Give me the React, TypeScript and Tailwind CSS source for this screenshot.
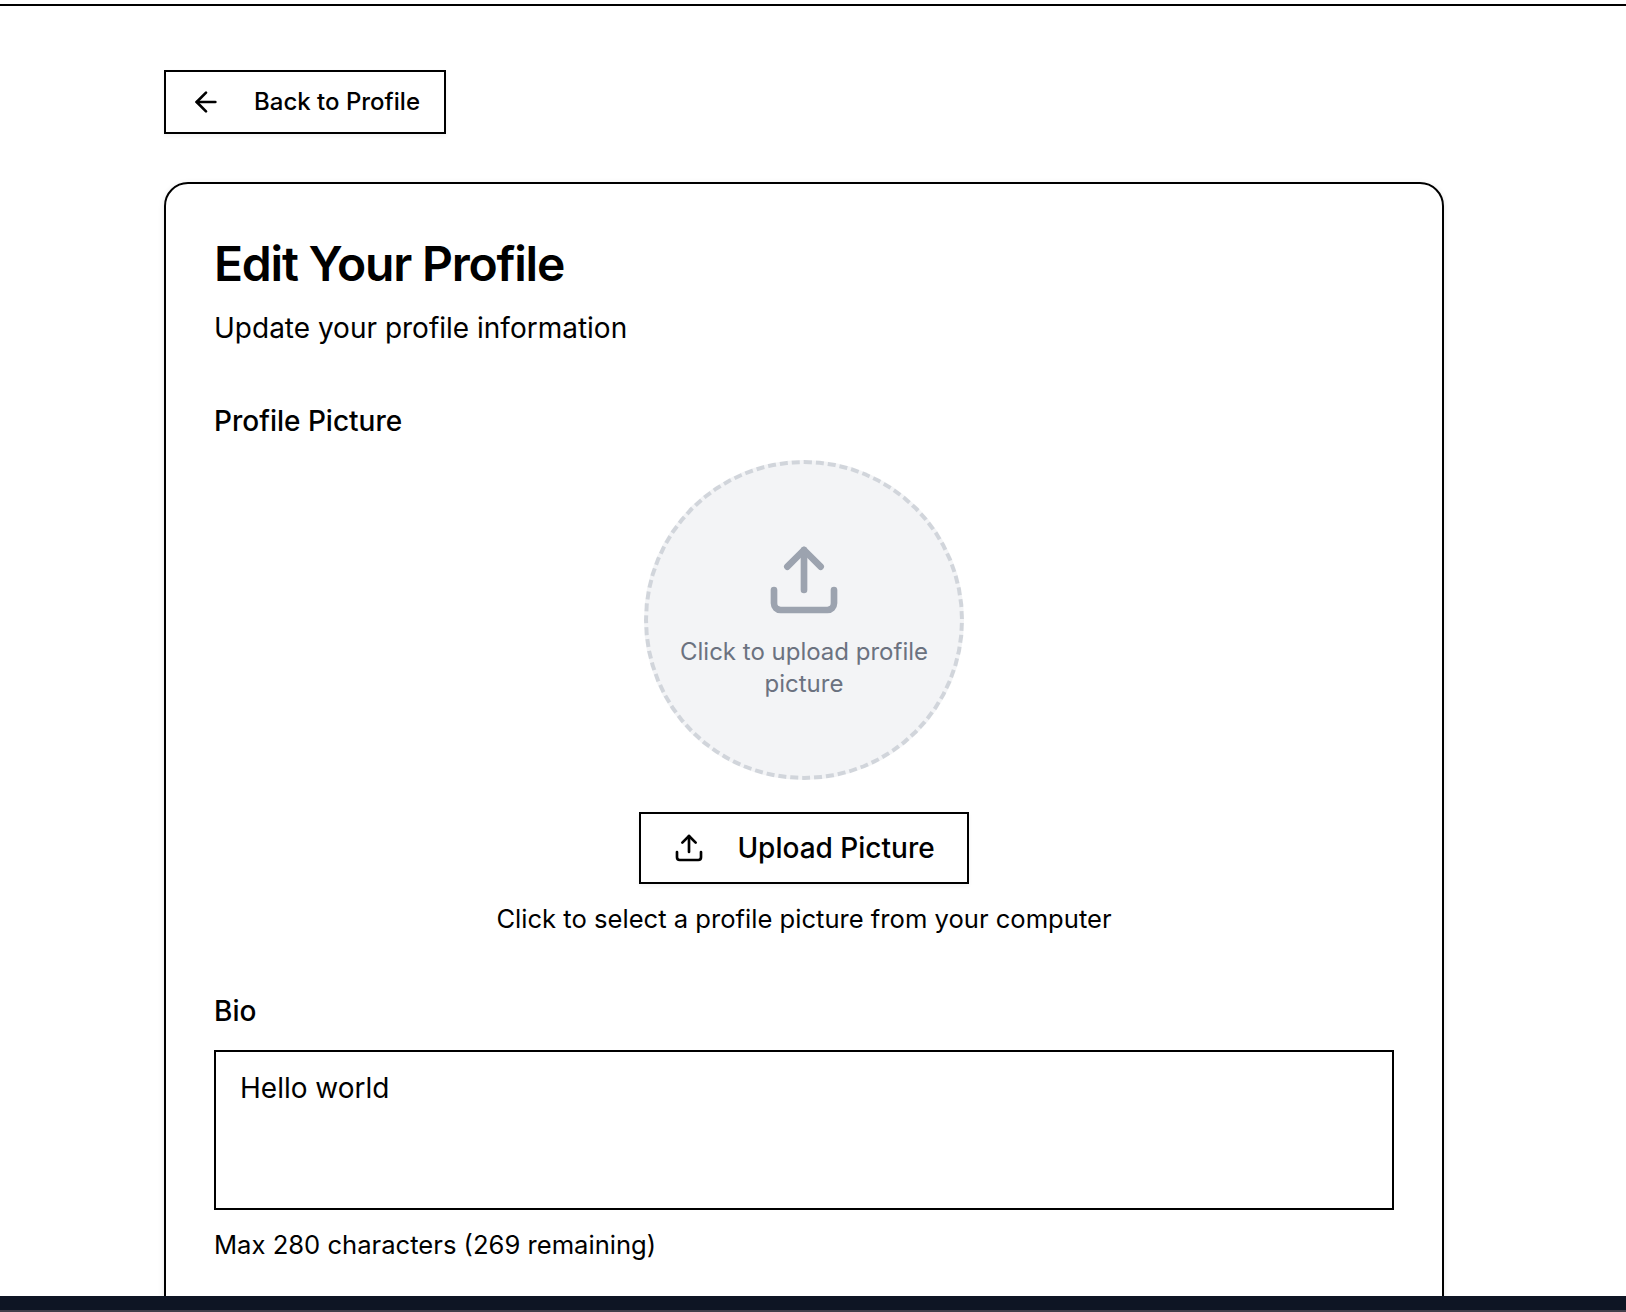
import { ArrowLeft, Upload } from "lucide-react";
import { useState } from "react";

const MAX_BIO = 280;

function Label({ children, htmlFor }: { children: string; htmlFor?: string }) {
  return (
    <label htmlFor={htmlFor} className="block text-[28px] leading-7 font-medium">
      {children}
    </label>
  );
}

export default function App() {
  const [bio, setBio] = useState("Hello world");

  return (
    <div className="flex h-[1312px] w-full flex-col overflow-hidden bg-white font-['Inter',sans-serif] text-black antialiased">
      <header className="h-1.5 shrink-0 border-b-2 border-black bg-white" />

      <main className="min-h-0 flex-1 overflow-hidden pt-16 pl-[164px]">
        <button className="flex h-16 items-center gap-8 border-2 border-black bg-white px-6 text-2xl font-medium shadow-[0_2px_4px_rgba(0,0,0,0.05)]">
          <ArrowLeft className="size-8" />
          Back to Profile
        </button>

        <section className="mt-12 h-[1200px] w-[1280px] rounded-3xl border-2 border-black bg-white p-12 shadow-[0_2px_6px_rgba(0,0,0,0.1)]">
          <h1 className="text-5xl leading-16 font-semibold tracking-tight">Edit Your Profile</h1>
          <p className="mt-3 text-[28px] leading-10">Update your profile information</p>

          <div className="mt-[59px]">
            <Label>Profile Picture</Label>
            <div className="mt-[25px] flex flex-col items-center">
              <div className="flex size-80 flex-col items-center justify-center gap-4 rounded-full border-4 border-dashed border-[#d1d5db] bg-[#f3f4f6] px-7">
                <Upload className="size-20 text-[#9ca3af]" />
                <p className="text-center text-2xl leading-8 text-[#6b7280]">
                  Click to upload profile picture
                </p>
              </div>
              <button className="mt-8 flex h-18 items-center gap-8 border-2 border-black bg-white px-8 text-[28px] leading-10 font-medium shadow-[0_2px_4px_rgba(0,0,0,0.05)]">
                <Upload className="size-8" />
                Upload Picture
              </button>
              <p className="mt-4 text-[25.6px] leading-[38.4px]">
                Click to select a profile picture from your computer
              </p>
            </div>
          </div>

          <div className="mt-[59px]">
            <Label htmlFor="bio">Bio</Label>
            <textarea
              id="bio"
              maxLength={MAX_BIO}
              value={bio}
              onChange={(e) => setBio(e.target.value)}
              className="mt-[25px] block h-40 w-full resize-none rounded-none border-2 border-black bg-white px-6 py-4 text-[28px] leading-10 outline-none"
            />
            <p className="mt-4 text-[25.6px] leading-[38.4px]">
              Max {MAX_BIO} characters ({MAX_BIO - bio.length} remaining)
            </p>
          </div>
        </section>
      </main>

      <footer className="h-4 shrink-0 border-b-2 border-[#433f4a] bg-[#0e1524]" />
    </div>
  );
}
